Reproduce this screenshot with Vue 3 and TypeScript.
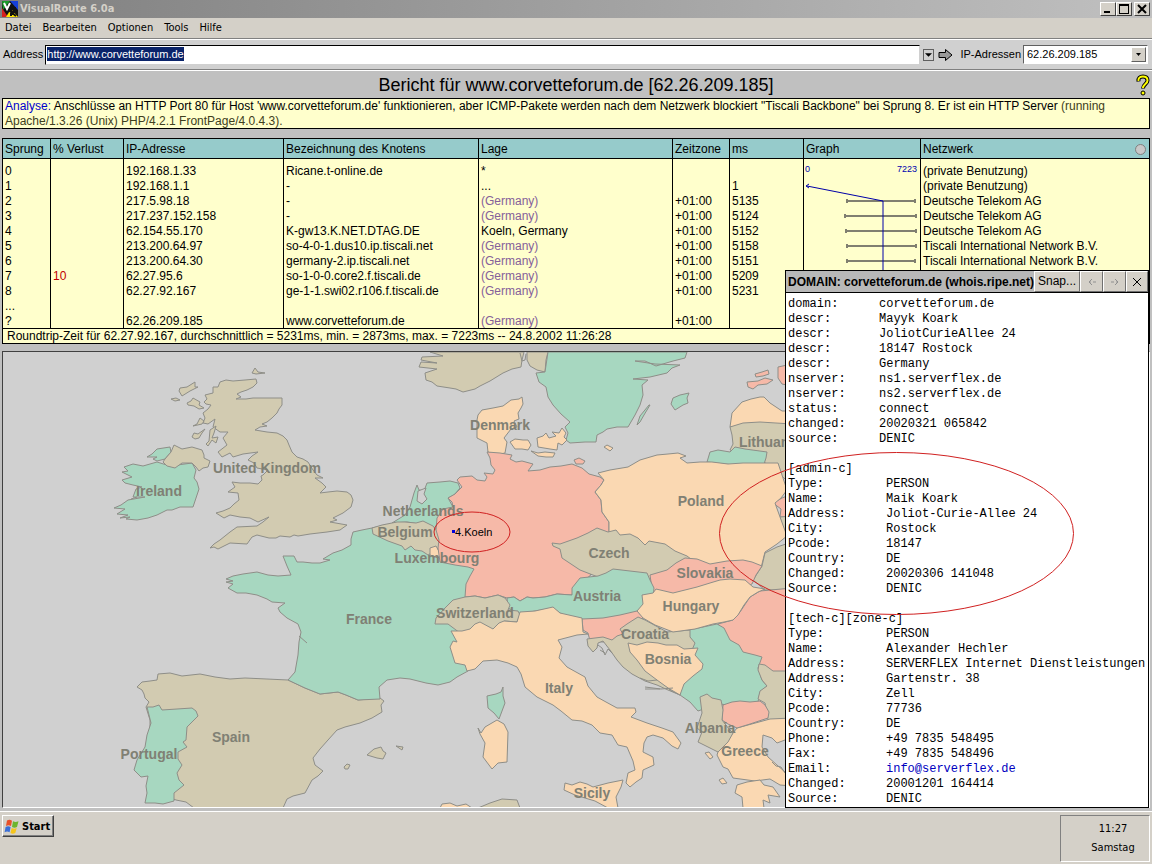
<script setup lang="ts">
import { ref } from 'vue'

interface Hop {
  hop: string
  loss: string
  ip: string
  node: string
  place: string
  zone: string
  ms: string
  network: string
}

interface Shape {
  tone: 'green' | 'tan' | 'salmon' | 'peach' | 'sea'
  points: string
}

interface Label {
  text: string
  x: number
  y: number
}

const address = ref('http://www.corvetteforum.de')
const menus = ['Datei', 'Bearbeiten', 'Optionen', 'Tools', 'Hilfe']

const hops: Hop[] = [
  { hop: '0', loss: '', ip: '192.168.1.33', node: 'Ricane.t-online.de', place: '*', zone: '', ms: '', network: '(private Benutzung)' },
  { hop: '1', loss: '', ip: '192.168.1.1', node: '-', place: '...', zone: '', ms: '1', network: '(private Benutzung)' },
  { hop: '2', loss: '', ip: '217.5.98.18', node: '-', place: '(Germany)', zone: '+01:00', ms: '5135', network: 'Deutsche Telekom AG' },
  { hop: '3', loss: '', ip: '217.237.152.158', node: '-', place: '(Germany)', zone: '+01:00', ms: '5124', network: 'Deutsche Telekom AG' },
  { hop: '4', loss: '', ip: '62.154.55.170', node: 'K-gw13.K.NET.DTAG.DE', place: 'Koeln, Germany', zone: '+01:00', ms: '5152', network: 'Deutsche Telekom AG' },
  { hop: '5', loss: '', ip: '213.200.64.97', node: 'so-4-0-1.dus10.ip.tiscali.net', place: '(Germany)', zone: '+01:00', ms: '5158', network: 'Tiscali International Network B.V.' },
  { hop: '6', loss: '', ip: '213.200.64.30', node: 'germany-2.ip.tiscali.net', place: '(Germany)', zone: '+01:00', ms: '5151', network: 'Tiscali International Network B.V.' },
  { hop: '7', loss: '10', ip: '62.27.95.6', node: 'so-1-0-0.core2.f.tiscali.de', place: '(Germany)', zone: '+01:00', ms: '5209', network: '' },
  { hop: '8', loss: '', ip: '62.27.92.167', node: 'ge-1-1.swi02.r106.f.tiscali.de', place: '(Germany)', zone: '+01:00', ms: '5231', network: '' },
  { hop: '...', loss: '', ip: '', node: '', place: '', zone: '', ms: '', network: '' },
  { hop: '?', loss: '', ip: '62.26.209.185', node: 'www.corvetteforum.de', place: '(Germany)', zone: '+01:00', ms: '', network: '' },
]

const ranges = [
  { y: 42, from: 43, to: 111 },
  { y: 57, from: 41, to: 112 },
  { y: 72, from: 42, to: 112 },
  { y: 87, from: 43, to: 112 },
  { y: 102, from: 43, to: 111 },
]

const domainInfo: [string, string][] = [
  ['domain:', 'corvetteforum.de'],
  ['descr:', 'Mayyk Koark'],
  ['descr:', 'JoliotCurieAllee 24'],
  ['descr:', '18147 Rostock'],
  ['descr:', 'Germany'],
  ['nserver:', 'ns1.serverflex.de'],
  ['nserver:', 'ns2.serverflex.de'],
  ['status:', 'connect'],
  ['changed:', '20020321 065842'],
  ['source:', 'DENIC'],
]

const contacts: { title: string; rows: [string, string][] }[] = [
  {
    title: '[admin-c]',
    rows: [
      ['Type:', 'PERSON'],
      ['Name:', 'Maik Koark'],
      ['Address:', 'Joliot-Curie-Allee 24'],
      ['City:', 'Rostock'],
      ['Pcode:', '18147'],
      ['Country:', 'DE'],
      ['Changed:', '20020306 141048'],
      ['Source:', 'DENIC'],
    ],
  },
  {
    title: '[tech-c][zone-c]',
    rows: [
      ['Type:', 'PERSON'],
      ['Name:', 'Alexander Hechler'],
      ['Address:', 'SERVERFLEX Internet Dienstleistungen'],
      ['Address:', 'Gartenstr. 38'],
      ['City:', 'Zell'],
      ['Pcode:', '77736'],
      ['Country:', 'DE'],
      ['Phone:', '+49 7835 548495'],
      ['Fax:', '+49 7835 548496'],
      ['Email:', 'info@serverflex.de'],
      ['Changed:', '20001201 164414'],
      ['Source:', 'DENIC'],
    ],
  },
]

const shapes: Shape[] = [
  // Great Britain and its islands
  { tone: 'tan', points: '220,382 226,380 233,381 245,380 256,379 257,383 253,387 247,390 241,392 237,394 241,397 236,399 246,399 253,398 282,398 282,405 279,409 277,413 272,418 267,422 262,424 267,426 260,427 255,430 267,432 277,433 283,436 287,440 289,445 292,452 297,457 303,459 308,462 313,470 317,475 323,478 315,478 322,483 326,487 320,493 328,492 337,491 347,492 351,495 353,500 351,507 343,513 333,518 337,520 330,522 347,525 340,530 327,532 310,534 298,536 294,535 290,537 280,536 276,538 269,538 257,535 252,537 247,544 230,543 222,547 218,549 214,547 210,548 214,544 220,540 230,532 237,527 257,526 263,522 269,517 258,522 250,518 240,517 230,515 224,518 216,513 223,511 230,508 234,504 239,500 238,493 228,492 235,487 232,482 240,483 250,483 258,484 262,480 261,476 263,475 268,470 257,468 254,463 248,460 252,456 258,452 243,454 233,457 230,453 222,457 218,452 227,445 223,438 228,432 220,432 213,427 215,419 208,424 203,423 205,418 203,413 208,409 211,405 206,404 204,402 207,399 205,395 213,393 213,387 218,387' },
  { tone: 'tan', points: '180,388 187,387 195,382 195,387 198,387 190,391 182,396 179,391' },
  { tone: 'tan', points: '187,403 191,401 193,398 200,402 199,405 204,408 199,409 194,406 188,405' },
  { tone: 'tan', points: '193,426 197,424 200,418 204,421 202,424' },
  { tone: 'tan', points: '192,437 194,433 198,434 205,429 202,433 199,438 195,439' },
  { tone: 'tan', points: '206,444 209,441 210,430 216,426 214,433 212,438 218,437 216,443 212,440 208,446' },
  { tone: 'tan', points: '252,373 255,368 258,372 265,373 256,374' },
  { tone: 'tan', points: '171,399 176,398 180,400 175,401' },
  // Ireland
  { tone: 'green', points: '124,467 133,464 143,466 157,462 170,466 192,463 196,470 194,478 197,482 199,489 196,498 193,507 180,507 172,510 167,510 157,515 148,518 137,520 126,519 130,517 120,518 128,515 117,514 125,509 114,508 121,505 128,500 145,497 133,497 136,489 142,487 133,485 125,483 122,480 132,477 122,472 128,471' },
  { tone: 'green', points: '147,457 152,454 157,449 170,447 171,452 165,459 157,461 153,459 157,457' },
  { tone: 'tan', points: '171,452 174,445 182,449 192,447 202,450 204,455 204,458 210,461 208,467 203,468 199,471 196,467 192,463 182,463 175,468 167,466 163,462 165,459' },
  // Scandinavia
  { tone: 'tan', points: '430,352 524,352 522,360 521,367 512,369 503,373 490,381 480,386 475,389 463,392 456,389 450,388 437,386 432,382 426,380 425,373 437,369 419,367 421,362 437,363 421,360 422,357 443,356' },
  { tone: 'tan', points: '527,352 548,352 546,360 545,372 537,370 530,366 527,360' },
  { tone: 'green', points: '548,352 687,352 685,358 673,361 656,366 645,361 635,361 655,364 680,365 672,368 667,373 650,377 633,379 648,380 642,385 643,395 640,405 635,415 628,427 617,427 607,429 603,432 597,435 596,442 585,442 570,443 566,440 568,433 565,427 570,422 561,414 553,405 548,397 546,387 539,382 536,373 545,372' },
  { tone: 'green', points: '673,398 680,395 689,393 687,398 688,403 683,405 675,410 671,404' },
  { tone: 'green', points: '637,425 640,416 649,405 650,405 644,415 640,422' },
  { tone: 'peach', points: '604,447 607,445 613,448 610,451' },
  // Denmark
  { tone: 'peach', points: '522,397 519,399 511,400 503,406 493,408 482,410 478,415 477,420 477,438 487,443 488,452 496,455 505,453 507,442 504,438 511,429 517,427 514,421 519,419 518,413 521,408 523,404' },
  { tone: 'peach', points: '510,442 515,439 523,440 528,440 531,445 528,450 522,449 515,449' },
  { tone: 'peach', points: '537,438 543,436 546,433 549,438 556,436 552,432 559,433 562,428 566,433 564,437 567,440 562,445 558,443 557,450 550,449 538,447' },
  { tone: 'peach', points: '531,451 538,453 545,452 555,453 553,457 546,457 538,456' },
  // Baltic coast
  { tone: 'salmon', points: '755,374 762,372 768,370 769,374 763,376 756,377' },
  { tone: 'salmon', points: '747,382 758,381 765,378 773,380 767,384 758,385 753,389 748,387' },
  { tone: 'salmon', points: '778,367 792,364 792,386 782,384 778,378' },
  { tone: 'peach', points: '730,427 732,413 742,402 751,399 760,397 764,397 770,403 782,411 792,411 792,426' },
  { tone: 'tan', points: '730,427 743,423 760,422 792,424 792,486 778,472 764,462 730,450 733,444 732,435' },
  { tone: 'green', points: '710,452 718,450 730,452 735,447 745,449 767,452 766,458 764,464 743,466 707,462' },
  { tone: 'salmon', points: '792,494 782,498 773,503 781,509 780,517 792,518' },
  { tone: 'tan', points: '780,517 792,516 792,540 785,537' },
  // Iberia
  { tone: 'tan', points: '158,674 170,673 182,676 200,674 215,677 230,679 245,678 288,680 305,688 320,694 338,692 346,695 358,700 380,698 384,701 381,705 382,712 372,718 360,723 345,727 337,730 328,740 320,749 313,758 315,765 323,771 318,776 312,780 305,793 293,796 287,799 283,808 194,808 186,802 176,800 150,790 150,720 146,707 149,702 145,698 144,694 142,690 137,687 142,682 150,681 157,680' },
  { tone: 'green', points: '147,707 153,707 159,705 162,710 177,709 192,708 196,711 198,716 187,727 186,740 183,742 187,747 178,752 178,759 182,765 177,773 179,780 184,785 174,793 174,801 163,804 155,803 145,803 147,793 146,786 148,776 141,777 134,770 137,760 145,747 147,735 151,723 149,715' },
  { tone: 'tan', points: '367,755 374,749 381,747 383,751 386,753 383,759 377,758' },
  { tone: 'tan', points: '344,767 347,764 350,765 348,769 345,769' },
  { tone: 'tan', points: '396,746 403,747 402,750' },
  // France and Corsica
  { tone: 'green', points: '372,528 362,530 353,532 351,539 351,545 342,550 333,553 323,559 330,560 320,563 312,563 303,562 297,562 294,556 283,556 287,566 291,575 278,576 268,575 257,572 243,574 233,576 226,579 233,581 226,582 233,584 228,588 237,593 246,593 257,595 267,599 272,602 285,603 278,608 280,612 287,618 298,624 301,632 299,642 298,655 295,672 288,680 305,688 320,694 338,692 346,695 358,700 380,699 379,687 387,680 400,678 410,679 426,683 438,685 450,682 457,677 468,671 480,640 480,570 430,540 385,525' },
  { tone: 'green', points: '487,696 496,694 501,692 503,687 503,696 505,703 499,719 494,713 488,708' },
  // Low countries
  { tone: 'green', points: '392,523 405,515 410,507 414,493 417,485 419,490 424,491 427,483 440,482 450,481 458,483 460,488 454,495 448,498 453,507 443,510 440,530 425,525 407,522' },
  { tone: 'sea', points: '418,491 426,488 424,494 427,499 422,504 417,501' },
  { tone: 'tan', points: '372,528 382,525 397,522 405,522 416,523 423,521 433,526 440,535 440,548 433,552 428,555 422,551 415,550 411,546 405,550 402,546 388,541 373,534' },
  { tone: 'peach', points: '430,548 436,546 441,555 438,558 430,555' },
  // Germany
  { tone: 'salmon', points: '487,452 500,453 512,455 510,459 516,462 522,461 533,464 528,471 540,470 550,467 561,466 572,464 582,468 589,474 600,477 604,480 601,485 595,492 601,500 602,512 609,522 609,532 600,550 590,576 575,585 572,595 557,594 545,597 533,598 527,597 520,601 514,597 507,598 498,595 485,598 475,596 465,597 466,584 470,576 474,569 468,567 455,565 440,562 438,548 439,540 436,530 437,518 443,509 453,507 452,502 448,498 455,494 462,487 457,480 460,477 472,476 477,480 485,481 487,477 484,473 493,474 495,470 491,465 490,458' },
  { tone: 'salmon', points: '574,460 579,458 585,461 583,464 576,464' },
  { tone: 'peach', points: '598,473 610,470 628,467 640,460 657,455 668,454 678,453 686,456 680,458 687,463 700,462 712,462 728,464 743,463 765,463 778,463 783,478 787,490 781,498 775,503 780,517 787,536 777,544 765,552 760,572 713,572 600,545 609,532 609,522 602,512 601,500 595,492 601,485 604,480' },
  { tone: 'tan', points: '552,543 560,544 577,538 588,533 597,528 608,532 616,530 620,535 630,534 638,538 645,545 649,541 665,544 675,551 687,556 700,566 667,582 598,577 580,570 562,558 560,549 553,546' },
  { tone: 'tan', points: '792,542 777,547 765,553 762,566 753,580 765,590 792,590' },
  { tone: 'salmon', points: '685,558 697,559 710,564 727,561 743,560 752,562 762,566 756,575 752,584 730,592 673,598 653,596 650,575 667,570 676,563' },
  { tone: 'green', points: '572,588 580,578 598,576 606,573 613,569 630,571 647,573 650,580 654,588 653,598 640,615 607,622 570,620 553,608 535,611 520,614 508,608 507,598 514,597 520,601 527,597 533,598 545,597 557,594 572,595' },
  { tone: 'tan', points: '435,624 436,618 445,608 453,600 465,597 475,596 485,598 498,595 505,598 510,605 508,610 518,611 520,615 517,622 504,621 500,632 460,633 448,624' },
  // Balkans
  { tone: 'salmon', points: '718,624 733,620 740,612 750,597 760,591 792,588 792,672 773,672 755,664 728,648' },
  { tone: 'green', points: '688,630 703,627 717,624 724,628 730,640 739,645 743,652 755,655 762,657 758,668 762,680 767,686 760,692 758,702 735,706 720,704 712,706 698,711 690,702 680,695 684,672 690,645' },
  { tone: 'tan', points: '759,664 765,665 773,671 792,671 792,720 768,720 765,703 758,699 760,691 767,686 762,680 758,670' },
  { tone: 'salmon', points: '582,619 603,618 620,615 637,611 643,617 640,630 620,640 603,642 590,641 588,633 583,630' },
  { tone: 'tan', points: '587,639 595,638 603,637 612,640 617,636 623,634 620,629 627,624 638,617 645,620 667,632 690,630 690,637 695,643 692,650 640,660 670,690 680,695 668,690 657,685 645,681 632,674 623,667 617,660 610,650 603,641 598,643 597,648 593,652 588,646' },
  { tone: 'peach', points: '628,643 637,645 647,642 658,643 666,645 677,645 684,649 698,648 695,655 703,664 702,669 693,676 684,684 680,695 668,688 657,680 645,671 637,660 630,652' },
  { tone: 'peach', points: '642,595 653,593 656,589 673,593 685,590 697,587 710,583 720,580 730,579 745,580 753,587 765,589 758,592 750,597 744,605 738,615 733,620 724,622 713,624 695,629 673,632 655,625 643,618 637,611 643,604' },
  { tone: 'peach', points: '718,752 733,733 737,728 770,719 792,718 792,740 785,740 777,743 772,738 763,735 762,747 768,757 777,765 792,778 792,786 780,785 770,779 755,781 733,778 728,769 723,767 717,755' },
  { tone: 'salmon', points: '723,705 732,702 740,701 750,702 760,701 765,705 769,712 768,718 750,724 737,728 728,724 722,720' },
  { tone: 'tan', points: '700,697 707,694 712,698 721,700 723,710 722,720 729,729 733,733 728,742 718,752 708,747 698,742 702,732 697,728 702,713' },
  { tone: 'peach', points: '737,785 747,782 760,780 764,785 773,787 780,797 768,795 770,803 763,800 764,808 743,808 742,797 735,793' },
  { tone: 'peach', points: '705,753 709,752 713,757 710,759' },
  { tone: 'peach', points: '719,780 723,778 727,783 722,784' },
  // Italy and the western Mediterranean
  { tone: 'peach', points: '451,631 462,631 470,629 475,624 480,622 493,629 499,623 504,621 517,622 520,612 535,611 553,607 560,613 582,618 583,632 588,634 577,635 558,640 562,647 559,658 567,667 585,677 588,686 597,697 606,702 617,708 635,708 636,712 631,717 647,723 662,728 673,732 681,743 678,749 672,746 663,738 653,735 647,737 644,743 643,752 653,757 654,765 643,770 642,778 636,782 630,787 626,783 628,773 635,770 633,761 627,747 618,745 612,735 600,733 592,725 582,721 572,720 561,711 553,705 537,697 525,687 521,674 517,667 508,663 497,660 483,661 475,669 467,671 465,665 455,663 450,647 453,641 457,642' },
  { tone: 'peach', points: '565,783 572,785 580,782 587,784 593,787 608,783 623,780 621,787 616,797 618,808 608,808 595,801 575,795 564,790' },
  { tone: 'peach', points: '478,728 481,733 485,727 497,720 504,724 508,732 507,762 498,763 492,769 483,757 485,743 480,734' },
  { tone: 'peach', points: '440,808 442,804 450,803 457,806 466,804 472,808' },
  { tone: 'tan', points: '478,808 490,803 502,799 517,800 520,808' },
]

const labels: Label[] = [
  { text: 'United Kingdom', x: 267, y: 473 },
  { text: 'Ireland', x: 159, y: 496 },
  { text: 'Denmark', x: 500, y: 430 },
  { text: 'Netherlands', x: 423, y: 516 },
  { text: 'Belgium', x: 405, y: 537 },
  { text: 'Luxembourg', x: 437, y: 563 },
  { text: 'France', x: 369, y: 624 },
  { text: 'Switzerland', x: 475, y: 618 },
  { text: 'Austria', x: 597, y: 601 },
  { text: 'Czech', x: 609, y: 558 },
  { text: 'Poland', x: 701, y: 506 },
  { text: 'Slovakia', x: 705, y: 578 },
  { text: 'Hungary', x: 691, y: 611 },
  { text: 'Croatia', x: 645, y: 639 },
  { text: 'Bosnia', x: 668, y: 664 },
  { text: 'Italy', x: 559, y: 693 },
  { text: 'Albania', x: 710, y: 733 },
  { text: 'Greece', x: 745, y: 756 },
  { text: 'Sicily', x: 592, y: 798 },
  { text: 'Spain', x: 231, y: 742 },
  { text: 'Portugal', x: 149, y: 759 },
  { text: 'Lithuania', x: 770, y: 447 },
]
</script>

<template>
  <div class="app">
    <header class="titlebar">
      <svg class="logo" viewBox="0 0 16 16" aria-hidden="true">
        <rect width="16" height="16" fill="#111" />
        <path d="M0 0h8L1 9z" fill="#1c9a2c" />
        <path d="M8 0h8v9z" fill="#1740d8" />
        <path d="M0 7v9h6z" fill="#d42020" />
        <path d="M4 16l5-8 7 8z" fill="#ffe600" />
        <path d="M2 2l3 6 3-6" fill="none" stroke="#fff" stroke-width="2" />
        <path d="M9 15V7h4v4H9l5 4" fill="none" stroke="#111" stroke-width="2" />
      </svg>
      <span class="caption">VisualRoute 6.0a</span>
      <div class="winbtns">
        <button type="button" aria-label="Minimieren"><svg viewBox="0 0 12 10"><path d="M2 7h6v2H2z" /></svg></button>
        <button type="button" aria-label="Maximieren"><svg viewBox="0 0 12 10"><path d="M1 0h10v10H1zM2 2v7h8V2z" fill-rule="evenodd" /></svg></button>
        <button type="button" class="close" aria-label="Schliessen"><svg viewBox="0 0 12 10"><path d="M2 1l8 8M10 1l-8 8" stroke="#000" stroke-width="2" /></svg></button>
      </div>
    </header>

    <nav class="menubar">
      <button v-for="m in menus" :key="m" type="button">{{ m }}</button>
    </nav>

    <form class="toolbar" @submit.prevent>
      <label for="address">Address</label>
      <div class="urlbox">
        <input id="address" v-model="address" type="text" />
      </div>
      <button type="button" class="drop" aria-label="Verlauf"><svg viewBox="0 0 8 4"><path d="M0 0h8L4 4z" /></svg></button>
      <button type="submit" class="go" aria-label="Los"><svg viewBox="0 0 15 14"><path d="M1 4.500h6.500v-3l6.500 5.500-6.500 5.500v-3H1z" fill="#999" stroke="#000" /></svg></button>
      <label for="ips" class="iplabel">IP-Adressen</label>
      <div class="selectbox">
        <select id="ips"><option>62.26.209.185</option></select>
        <span class="arrow"><svg viewBox="0 0 5 3"><path d="M0 0h5L2.500 3z" /></svg></span>
      </div>
    </form>

    <main class="report">
      <div class="heading">
        <h1>Bericht für www.corvetteforum.de [62.26.209.185]</h1>
        <button type="button" class="help" aria-label="Info">
          <svg viewBox="0 0 14 22">
            <path d="M2.500 7.500C2 4 4 2.500 7 2.500s4.500 1.500 4.500 4c0 3.500-4.500 3.500-4.500 8" fill="none" stroke="#000" stroke-width="4" />
            <path d="M2.500 7C2 4 4 2.500 7 2.500s4.500 1.500 4.500 4c0 3.500-4.500 3.500-4.500 7.500" fill="none" stroke="#ff0" stroke-width="2" />
            <circle cx="7" cy="19" r="2" fill="#ff0" stroke="#000" />
          </svg>
        </button>
      </div>

      <p class="analysis"><span class="blue">Analyse:</span> Anschlüsse an HTTP Port 80 für Host 'www.corvetteforum.de' funktionieren, aber ICMP-Pakete werden nach dem Netzwerk blockiert "Tiscali Backbone" bei Sprung 8. Er ist ein HTTP Server <span class="dim">(running Apache/1.3.26 (Unix) PHP/4.2.1 FrontPage/4.0.4.3).</span></p>

      <table class="route">
        <colgroup>
          <col class="c-hop" /><col class="c-loss" /><col class="c-ip" /><col class="c-node" /><col class="c-place" /><col class="c-zone" /><col class="c-ms" /><col class="c-graph" /><col />
        </colgroup>
        <thead>
          <tr>
            <th>Sprung</th><th>% Verlust</th><th>IP-Adresse</th><th>Bezeichnung des Knotens</th><th>Lage</th><th>Zeitzone</th><th>ms</th><th>Graph</th>
            <th><div class="lasthead">Netzwerk<i class="lamp"></i></div></th>
          </tr>
        </thead>
        <tbody>
          <tr v-for="(h, i) in hops" :key="i">
            <td>{{ h.hop }}</td>
            <td class="red">{{ h.loss }}</td>
            <td>{{ h.ip }}</td>
            <td>{{ h.node }}</td>
            <td :class="{ guess: h.place === '(Germany)' }">{{ h.place }}</td>
            <td>{{ h.zone }}</td>
            <td>{{ h.ms }}</td>
            <td v-if="i === 0" class="graph" :rowspan="hops.length">
              <svg viewBox="0 0 116 169">
                <text x="1" y="13">0</text>
                <text x="113" y="13" text-anchor="end">7223</text>
                <path v-for="r in ranges" :key="r.y" :d="`M${r.from} ${r.y}H${r.to}M${r.from} ${r.y - 2}v4M${r.to} ${r.y - 2}v4`" class="range" />
                <path d="M3 27L79 42V169M5 25L2 27l3 2" class="trace" />
              </svg>
            </td>
            <td>{{ h.network }}</td>
          </tr>
        </tbody>
        <tfoot>
          <tr><td colspan="9">Roundtrip-Zeit für 62.27.92.167, durchschnittlich = 5231ms, min. = 2873ms, max. = 7223ms -- 24.8.2002 11:26:28</td></tr>
        </tfoot>
      </table>

      <div class="map">
        <svg viewBox="3 352 1146 455" preserveAspectRatio="xMinYMin slice" role="img" aria-label="Karte">
          <polygon v-for="(s, i) in shapes" :key="i" :points="s.points" :class="s.tone" />
          <path class="coast" d="M598 645l4 3 3 7 3-6 4 4M600 650l5 3M645 687l16 2 12-1M645 689h15M640 678l8 3 9-1M772 762l4 4 5 1 4 6M520 353l2 8 3-1 1-6M131 499l6-2M299 636l8 7" />
          <text v-for="l in labels" :key="l.text" :x="l.x" :y="l.y" class="country">{{ l.text }}</text>
          <rect x="452" y="530" width="3" height="3" fill="#00d" />
          <text x="455" y="536" class="city">4.Koeln</text>
        </svg>
      </div>
    </main>

    <footer class="taskbar">
      <button type="button" class="start">
        <svg viewBox="0 0 16 15" aria-hidden="true">
          <path d="M3 1.500c2-1 3-1 5 .2L7 7C5 6 4 6 2 7z" fill="#e8512a" />
          <path d="M9 2.300c2 1 3 1 5.500 0L13 8c-2 1-3 1-5 0z" fill="#6cb52d" />
          <path d="M1.600 8c2-1 3-1 5 0l-1 5.300c-2-1-3-1-5 0z" fill="#3a6fd8" />
          <path d="M7.700 9c2 1 3 1 5 0l-1.400 5c-2 1-3 1-4.800 0z" fill="#f5c51c" />
        </svg>
        Start
      </button>
      <div class="tray"><span>11:27</span><span>Samstag</span></div>
    </footer>

    <section class="whois">
      <header>
        <h2>DOMAIN: corvetteforum.de (whois.ripe.net)</h2>
        <button type="button" class="snap">Snap...</button>
        <button type="button" class="nav" aria-label="Zurück"><svg viewBox="0 0 10 8"><path d="M5 1L2 4l3 3M3 4h1M6 4h3" /></svg></button>
        <button type="button" class="nav" aria-label="Vor"><svg viewBox="0 0 10 8"><path d="M5 1l3 3-3 3M7 4H6M4 4H1" /></svg></button>
        <button type="button" class="x" aria-label="Fenster schliessen"><svg viewBox="0 0 8 8"><path d="M0 0l8 8M8 0L0 8" /></svg></button>
      </header>
      <div class="record">
        <dl class="domain">
          <template v-for="(r, i) in domainInfo" :key="i"><dt>{{ r[0] }}</dt><dd>{{ r[1] }}</dd></template>
        </dl>
        <template v-for="c in contacts" :key="c.title">
          <h3>{{ c.title }}</h3>
          <dl>
            <template v-for="(r, i) in c.rows" :key="i">
              <dt>{{ r[0] }}</dt>
              <dd><a v-if="r[0] === 'Email:'" :href="'mailto:' + r[1]">{{ r[1] }}</a><template v-else>{{ r[1] }}</template></dd>
            </template>
          </dl>
        </template>
      </div>
    </section>

    <svg class="marks" viewBox="0 0 1152 864" preserveAspectRatio="xMaxYMin" aria-hidden="true">
      <ellipse cx="896.500" cy="533.500" rx="177" ry="81" />
    </svg>
    <svg class="marks" viewBox="0 0 1152 864" preserveAspectRatio="xMinYMin" aria-hidden="true">
      <ellipse cx="472" cy="532" rx="38" ry="20" />
    </svg>
  </div>
</template>

<style>
body {
  margin: 0;
}
</style>

<style scoped>
.app {
  position: relative;
  display: flex;
  flex-direction: column;
  min-height: 100vh;
  overflow: hidden;
  background: #d4d0c8;
  color: #000;
  font: 12px/15px "Liberation Sans", Arial, sans-serif;
}
* {
  box-sizing: border-box;
}
button {
  font: inherit;
  color: inherit;
  padding: 0;
  border: 0;
  background: none;
}
svg {
  display: block;
}
h1,
h2,
h3,
p,
dl,
dd {
  margin: 0;
}
.titlebar {
  display: flex;
  align-items: center;
  height: 18px;
  padding: 0 2px;
  background: linear-gradient(90deg, #808080, #c0c0c0);
}
.logo {
  width: 16px;
  height: 16px;
}
.caption {
  flex: 1;
  padding-left: 2px;
  color: #d4d0c8;
  font: bold 11px/14px "DejaVu Sans Condensed", "DejaVu Sans", sans-serif;
}
.winbtns {
  display: flex;
}
.winbtns button {
  display: flex;
  align-items: center;
  justify-content: center;
  width: 16px;
  height: 14px;
  background: #d4d0c8;
  border: 1px solid;
  border-color: #fff #404040 #404040 #fff;
}
.winbtns .close {
  margin-left: 2px;
}
.winbtns svg {
  width: 12px;
  height: 10px;
}
.menubar {
  display: flex;
  gap: 11px;
  height: 21px;
  padding: 0 5px;
  border-bottom: 1px solid #808080;
  font: 11px/20px "DejaVu Sans Condensed", "DejaVu Sans", sans-serif;
}
.toolbar {
  display: flex;
  align-items: center;
  height: 31px;
  padding: 0 4px 0 3px;
  background: #d0d0d0;
  border-top: 1px solid #fff;
  border-bottom: 1px solid #808080;
  font-size: 11px;
}
.urlbox {
  flex: 1;
  height: 20px;
  margin-left: 2px;
  padding: 1px;
  background: #fff;
  border: 1px solid;
  border-color: #000 #d0d0d0 #d0d0d0 #000;
}
.urlbox input {
  display: block;
  field-sizing: content;
  height: 14px;
  padding: 0;
  border: 0;
  outline: 0;
  background: #0a246a;
  color: #fff;
  font: 11px/14px "Liberation Sans", Arial, sans-serif;
}
.drop {
  display: flex;
  align-items: center;
  justify-content: center;
  width: 11px;
  height: 12px;
  margin-left: 3px;
  border: 1px solid #606060;
}
.drop svg {
  width: 7px;
  height: 4px;
}
.go {
  margin-left: 4px;
}
.go svg {
  width: 15px;
  height: 14px;
}
.iplabel {
  margin-left: 7px;
}
.selectbox {
  position: relative;
  width: 125px;
  height: 19px;
  margin-left: 2px;
  background: #fff;
  border: 1px solid;
  border-color: #606060 #fff #fff #606060;
}
.selectbox select {
  width: 100%;
  height: 17px;
  padding: 0 3px;
  border: 0;
  appearance: none;
  background: none;
  color: #000;
  font: 11px/17px "Liberation Sans", Arial, sans-serif;
}
.arrow {
  position: absolute;
  top: 1px;
  right: 1px;
  display: flex;
  align-items: center;
  justify-content: center;
  width: 15px;
  height: 15px;
  background: #d4d0c8;
  border: 1px solid;
  border-color: #fff #606060 #606060 #fff;
  pointer-events: none;
}
.arrow svg {
  width: 5px;
  height: 3px;
}
.report {
  flex: 1;
  display: flex;
  flex-direction: column;
  padding: 0 2px;
  background: #c0c0c0;
  border-top: 1px solid #fff;
}
.heading {
  display: grid;
  grid-template-columns: 14px 1fr 14px;
  align-items: center;
  height: 27px;
}
.heading h1 {
  grid-column: 2;
  text-align: center;
  font-size: 18px;
  font-weight: 400;
  line-height: 26px;
}
.help svg {
  width: 14px;
  height: 22px;
}
.analysis {
  height: 31px;
  padding: 0 2px;
  background: #ffc;
  border: 1px solid #000;
}
.blue {
  color: #00c;
}
.dim {
  color: #404020;
}
.route {
  width: 100%;
  margin-top: 9px;
  table-layout: fixed;
  border-spacing: 0;
  border: 1px solid #000;
  border-left: 0;
  background: #ffc;
}
.c-hop {
  width: 48px;
}
.c-loss {
  width: 73px;
}
.c-ip {
  width: 160px;
}
.c-node {
  width: 195px;
}
.c-place {
  width: 194px;
}
.c-zone {
  width: 57px;
}
.c-ms {
  width: 74px;
}
.c-graph {
  width: 117px;
}
.route th,
.route td {
  height: 15px;
  padding: 2px 0 0 2px;
  border-left: 1px solid #000;
  text-align: left;
  font-weight: 400;
  line-height: 13px;
  white-space: nowrap;
}
.route th {
  height: 20px;
  background: #96cbcb;
  border-bottom: 1px solid #000;
}
.route tbody tr:first-child td {
  height: 19px;
  padding-top: 6px;
}
.route tbody td.red {
  color: #c00000;
}
.route tbody td.guess {
  color: #85609a;
}
.route tbody tr:first-child td.graph {
  padding: 0;
  vertical-align: top;
}
.graph svg {
  width: 116px;
  height: 169px;
}
.graph text {
  fill: #0000b0;
  font-size: 9px;
}
.range {
  fill: none;
  stroke: #807f70;
  stroke-width: 2;
}
.trace {
  fill: none;
  stroke: #0000a8;
}
.route tfoot td {
  padding: 1px 0 0 4px;
  border-top: 1px solid #000;
}
.lasthead {
  display: flex;
  align-items: center;
  justify-content: space-between;
  padding-right: 3px;
}
.lamp {
  width: 11px;
  height: 11px;
  border: 1px solid #808080;
  border-radius: 50%;
  background: #c8c8c8;
}
.map {
  flex: 1;
  margin-top: 7px;
  margin-bottom: 3px;
  min-height: 200px;
  background: #d0d0d0;
  border: 1px solid;
  border-color: #404040 #fff #fff #404040;
  overflow: hidden;
}
.map svg {
  width: 100%;
  height: 100%;
}
.map polygon {
  stroke: #8e8e88;
  stroke-width: 1;
  stroke-linejoin: round;
}
.coast {
  fill: none;
  stroke: #8e8e88;
}
.green {
  fill: #a7d7c0;
}
.tan {
  fill: #d2cbb1;
}
.salmon {
  fill: #f6b9a8;
}
.peach {
  fill: #fad8b2;
}
.sea {
  fill: #d0d0d0;
}
.country {
  fill: #808074;
  font-size: 14px;
  font-weight: 700;
  text-anchor: middle;
}
.city {
  font-size: 11px;
}
.taskbar {
  display: flex;
  align-items: flex-start;
  justify-content: space-between;
  height: 53px;
  padding: 3px 2px 2px;
  border-top: 1px solid #fff;
  font: 11px/19px "DejaVu Sans Condensed", "DejaVu Sans", sans-serif;
}
.start {
  display: flex;
  align-items: center;
  gap: 2px;
  width: 52px;
  height: 22px;
  padding-left: 1px;
  border: 1px solid;
  border-color: #fff #404040 #404040 #fff;
  box-shadow: inset -1px -1px #808080;
  font-weight: 700;
}
.start svg {
  width: 16px;
  height: 15px;
}
.tray {
  display: flex;
  flex-direction: column;
  align-items: center;
  width: 90px;
  height: 47px;
  padding: 3px 0 0 16px;
  border: 1px solid;
  border-color: #808080 #fff #fff #808080;
}
.whois {
  position: absolute;
  top: 270px;
  right: 3px;
  width: 364px;
  background: #fff;
  border: 1px solid #000;
}
.whois header {
  display: flex;
  align-items: center;
  height: 22px;
  background: #b8b8b8;
  border-bottom: 1px solid #000;
}
.whois h2 {
  flex: 1;
  padding-left: 2px;
  font-size: 12px;
  line-height: 20px;
  white-space: nowrap;
}
.whois header button {
  display: flex;
  flex: none;
  align-items: center;
  justify-content: center;
  height: 21px;
  background: #d4d0c8;
  border: 1px solid;
  border-color: #fff #707070 #707070 #fff;
}
.whois .snap {
  width: 46px;
}
.whois .nav {
  width: 23px;
}
.whois .x {
  width: 22px;
}
.whois header svg {
  width: 10px;
  height: 8px;
  fill: none;
  stroke: #909090;
}
.whois .x svg {
  width: 8px;
  stroke: #000;
}
.record {
  padding: 4px 2px 0;
  font: 12px/15px "Liberation Mono", "Courier New", monospace;
}
.record dl {
  display: grid;
  grid-template-columns: 98px 1fr;
  margin-bottom: 15px;
  white-space: nowrap;
}
.record dl:last-child {
  margin-bottom: 0;
}
.record .domain {
  grid-template-columns: 91px 1fr;
}
.record h3 {
  font: inherit;
}
.record a {
  color: #0000c0;
  text-decoration: none;
}
.marks {
  position: absolute;
  top: 0;
  left: 0;
  width: 100%;
  height: 864px;
  pointer-events: none;
  fill: none;
  stroke: #d02020;
  stroke-width: 1;
}
</style>
